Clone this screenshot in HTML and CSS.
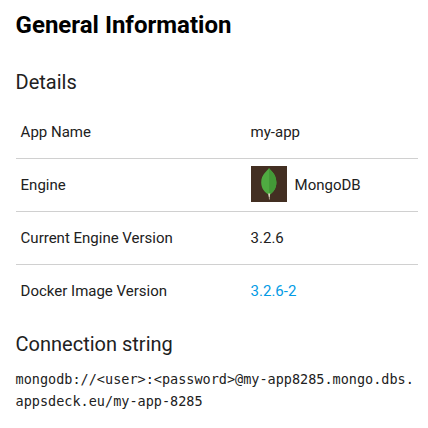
FILE: index.html
```html
<!DOCTYPE html>
<html lang="en">
<head>
<meta charset="utf-8">
<title>General Information</title>
<link rel="stylesheet" href="styles.css">
</head>
<body>
<main class="panel">
  <h1 class="title">General Information</h1>
  <h2 class="subtitle">Details</h2>
  <dl class="details">
    <div class="row"><dt>App Name</dt><dd>my-app</dd></div>
    <div class="row"><dt>Engine</dt><dd class="engine">
      <svg class="logo" viewBox="0 0 36 36" aria-hidden="true">
        <rect width="36" height="36" fill="#432f22"/>
        <path d="M17.500 27h1.200l.2 6.500h-.9z" fill="#b5ad96"/>
        <path d="M18 2C19 4.500 25.400 7.500 25.400 16.500c0 6.500-3.600 10.200-7.200 12.500-4-2.300-8-6-8-12.500C10.200 8 16.500 5 18 2z" fill="#4faa41"/>
        <path d="M18 2C19 4.500 25.400 7.500 25.400 16.500c0 6.500-3.600 10.200-7.200 12.500z" fill="#439937"/>
        <path d="M17.200 27.500h2l-.5 3.500h-.8z" fill="#ded9c5"/>
      </svg>
      <span>MongoDB</span></dd></div>
    <div class="row"><dt>Current Engine Version</dt><dd>3.2.6</dd></div>
    <div class="row"><dt>Docker Image Version</dt><dd><a class="link" href="#">3.2.6-2</a></dd></div>
  </dl>
  <h2 class="subtitle">Connection string</h2>
  <code class="connection">mongodb://&lt;user&gt;:&lt;password&gt;@my-app8285.mongo.dbs.appsdeck.eu/my-app-8285</code>
</main>
</body>
</html>
```
FILE: styles.css
```css
body { margin: 0; background: #fff; color: #212121; font: 15px/22px Roboto, sans-serif; }
.panel { padding: 9px 10px 0 15.6px; }
.title { margin: 0; font-size: 24px; line-height: 32px; font-weight: 700; color: #000; }
.subtitle { margin: 0; font-size: 20px; line-height: 24px; font-weight: 400; }
.title + .subtitle { margin-top: 29px; }
.details { margin: 12px 0 15px; }
.row { display: grid; grid-template-columns: 230px 1fr; align-items: center; height: 52px; padding-left: 5px; border-bottom: 1px solid #d0d0d0; }
.row:last-child { border-bottom: 0; }
dd { margin: 0; }
.engine { display: flex; align-items: center; gap: 8px; }
.logo { width: 36px; height: 36px; margin-bottom: 2px; }
.link { color: #039be5; text-decoration: none; }
.connection { display: block; margin-top: 12px; font: 13.5px/22px "DejaVu Sans Mono", monospace; word-break: break-all; }
```
